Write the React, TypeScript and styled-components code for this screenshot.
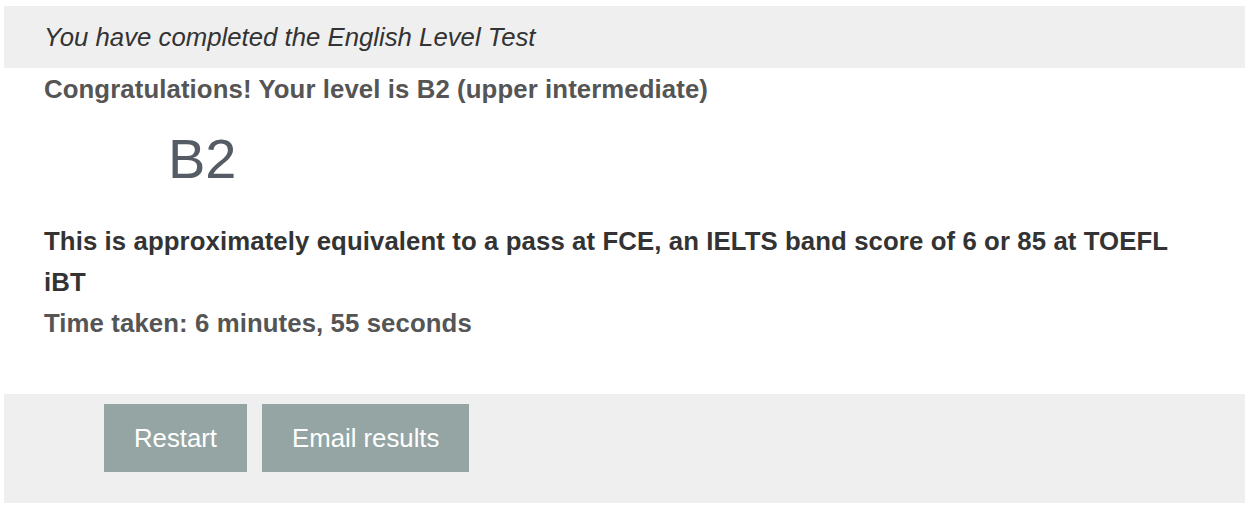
import React from "react";
import styled, { createGlobalStyle } from "styled-components";

const GlobalStyle = createGlobalStyle`
  html, body {
    margin: 0;
    padding: 0;
    background: #ffffff;
  }
  body {
    font-family: "Liberation Sans", Arial, Helvetica, sans-serif;
  }
`;

const Page = styled.div`
  margin: 6px 13px 0 4px;
  display: flex;
  flex-direction: column;
`;

const Header = styled.div`
  height: 62px;
  background: #efefef;
  display: flex;
  align-items: center;
  padding: 0 40px;
  font-size: 25.75px;
  font-style: italic;
  color: #333333;
`;

const Content = styled.div`
  display: flex;
  flex-direction: column;
  padding: 1px 60px 0 40px;
`;

const Line = styled.div<{ $tone?: "mid" | "dark" }>`
  font-size: 25.75px;
  font-weight: bold;
  line-height: 41px;
  letter-spacing: 0.1px;
  color: ${(p) => (p.$tone === "dark" ? "#333333" : "#555555")};
`;

const Level = styled.div`
  font-size: 56px;
  line-height: 64px;
  color: #555c66;
  margin: 17px 0 30px 124px;
`;

const Footer = styled.div`
  margin-top: 50px;
  background: #efefef;
  height: 109px;
  box-sizing: border-box;
  padding: 10px 0 0 100px;
  display: flex;
  align-items: flex-start;
  gap: 15px;
`;

const Button = styled.button`
  height: 68px;
  padding: 0 30px;
  border: none;
  border-radius: 0;
  background: #95a5a4;
  color: #ffffff;
  font-family: "Liberation Sans", Arial, Helvetica, sans-serif;
  font-size: 25.75px;
  cursor: pointer;
`;

export default function App() {
  return (
    <>
      <GlobalStyle />
      <Page>
        <Header>You have completed the English Level Test</Header>
        <Content>
          <Line>Congratulations! Your level is B2 (upper intermediate)</Line>
          <Level>B2</Level>
          <Line $tone="dark">
            This is approximately equivalent to a pass at FCE, an IELTS band score of 6 or 85 at TOEFL iBT
          </Line>
          <Line>Time taken: 6 minutes, 55 seconds</Line>
        </Content>
        <Footer>
          <Button>Restart</Button>
          <Button>Email results</Button>
        </Footer>
      </Page>
    </>
  );
}
